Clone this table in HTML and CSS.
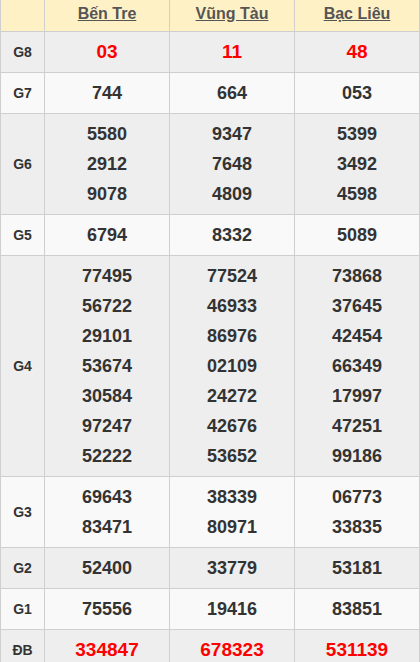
FILE: index.html
```html
<!DOCTYPE html>
<html lang="vi">
<head>
<meta charset="utf-8">
<link rel="stylesheet" href="styles.css">
</head>
<body>
<table class="kq">
  <colgroup>
    <col class="c-label"><col class="c-prov"><col class="c-prov"><col class="c-prov">
  </colgroup>
  <thead>
    <tr class="head">
      <th></th>
      <th><a href="#">Bến Tre</a></th>
      <th><a href="#">Vũng Tàu</a></th>
      <th><a href="#">Bạc Liêu</a></th>
    </tr>
  </thead>
  <tbody>
    <tr class="dark">
      <td class="lbl">G8</td>
      <td><div class="n red">03</div></td>
      <td><div class="n red">11</div></td>
      <td><div class="n red">48</div></td>
    </tr>
    <tr class="light">
      <td class="lbl">G7</td>
      <td><div class="n">744</div></td>
      <td><div class="n">664</div></td>
      <td><div class="n">053</div></td>
    </tr>
    <tr class="dark">
      <td class="lbl">G6</td>
      <td><div class="n">5580</div><div class="n">2912</div><div class="n">9078</div></td>
      <td><div class="n">9347</div><div class="n">7648</div><div class="n">4809</div></td>
      <td><div class="n">5399</div><div class="n">3492</div><div class="n">4598</div></td>
    </tr>
    <tr class="light">
      <td class="lbl">G5</td>
      <td><div class="n">6794</div></td>
      <td><div class="n">8332</div></td>
      <td><div class="n">5089</div></td>
    </tr>
    <tr class="dark">
      <td class="lbl">G4</td>
      <td><div class="n">77495</div><div class="n">56722</div><div class="n">29101</div><div class="n">53674</div><div class="n">30584</div><div class="n">97247</div><div class="n">52222</div></td>
      <td><div class="n">77524</div><div class="n">46933</div><div class="n">86976</div><div class="n">02109</div><div class="n">24272</div><div class="n">42676</div><div class="n">53652</div></td>
      <td><div class="n">73868</div><div class="n">37645</div><div class="n">42454</div><div class="n">66349</div><div class="n">17997</div><div class="n">47251</div><div class="n">99186</div></td>
    </tr>
    <tr class="light">
      <td class="lbl">G3</td>
      <td><div class="n">69643</div><div class="n">83471</div></td>
      <td><div class="n">38339</div><div class="n">80971</div></td>
      <td><div class="n">06773</div><div class="n">33835</div></td>
    </tr>
    <tr class="dark">
      <td class="lbl">G2</td>
      <td><div class="n">52400</div></td>
      <td><div class="n">33779</div></td>
      <td><div class="n">53181</div></td>
    </tr>
    <tr class="light">
      <td class="lbl">G1</td>
      <td><div class="n">75556</div></td>
      <td><div class="n">19416</div></td>
      <td><div class="n">83851</div></td>
    </tr>
    <tr class="dark">
      <td class="lbl">ĐB</td>
      <td><div class="n red">334847</div></td>
      <td><div class="n red">678323</div></td>
      <td><div class="n red">531139</div></td>
    </tr>
  </tbody>
</table>
</body>
</html>
```
FILE: styles.css
```css
html, body {
  margin: 0;
  padding: 0;
  background: #ffffff;
}

body {
  font-family: "Liberation Sans", Arial, sans-serif;
  color: #333333;
}

.kq {
  width: 420px;
  border-collapse: collapse;
  table-layout: fixed;
}

.c-label { width: 44px; }
.c-prov { width: auto; }

.kq th,
.kq td {
  border: 1px solid #cfcfcf;
  text-align: center;
  vertical-align: middle;
  padding: 0;
}

.kq th { border-top: 0; }

.head th {
  background: #fff1c6;
  height: 31px;
  font-size: 16px;
  font-weight: bold;
  vertical-align: top;
  padding-top: 5px;
  box-sizing: border-box;
}

.head a {
  color: #555555;
  text-decoration: underline;
}

.kq td {
  padding: 5px 0;
}

.lbl {
  font-size: 14px;
  font-weight: bold;
  color: #333333;
}

.n {
  font-size: 18px;
  font-weight: bold;
  line-height: 30px;
  color: #333333;
}

.n.red {
  color: #ff0000;
  font-size: 19px;
}

.dark td { background: #eeeeee; }
.light td { background: #f9f9f9; }
```
